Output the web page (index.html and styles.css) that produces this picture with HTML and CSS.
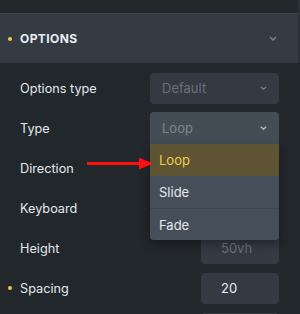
FILE: index.html
```html
<!DOCTYPE html>
<html lang="en">
<head>
    <meta charset="UTF-8">
    <meta name="viewport" content="width=device-width, initial-scale=1.0">
    <title>Options</title>
    <link rel="stylesheet" href="styles.css">
</head>
<body>
    <div class="topbar"></div>
    <div class="panel-head">
        <span class="dot"></span>
        <span class="title">OPTIONS</span>
        <svg class="chev head-chev" width="8" height="5" viewBox="0 0 8 5"><path d="M1 1l3 3 3-3" fill="none" stroke="currentColor" stroke-width="1.3"/></svg>
    </div>
    <div class="rows">
        <div class="row">
            <span class="label">Options type</span>
            <div class="box wide muted">Default
                <svg class="chev" width="7" height="4" viewBox="0 0 7 4"><path d="M.8.8l2.7 2.4L6.2.8" fill="none" stroke="currentColor" stroke-width="1.1"/></svg>
            </div>
        </div>
        <div class="row">
            <span class="label">Type</span>
            <div class="select-wrap">
                <div class="box wide open">Loop
                    <svg class="chev light" width="7" height="4" viewBox="0 0 7 4"><path d="M.8.8l2.7 2.4L6.2.8" fill="none" stroke="currentColor" stroke-width="1.3"/></svg>
                </div>
                <ul class="menu">
                    <li class="active">Loop</li>
                    <li>Slide</li>
                    <li class="split">Fade</li>
                </ul>
            </div>
        </div>
        <div class="row">
            <span class="label">Direction</span>
        </div>
        <div class="row">
            <span class="label">Keyboard</span>
        </div>
        <div class="row">
            <span class="label">Height</span>
            <div class="box narrow muted">50vh</div>
        </div>
        <div class="row">
            <span class="dot"></span>
            <span class="label">Spacing</span>
            <div class="box narrow">20</div>
        </div>
        <div class="row">
            <span class="label"></span>
            <div class="box narrow"></div>
        </div>
    </div>
    <svg class="pointer" width="300" height="314" viewBox="0 0 300 314">
        <line x1="87" y1="163.5" x2="142" y2="163.5" stroke="#ff0f0f" stroke-width="3"/>
        <polygon points="139,157.5 153,163.5 139,169.5" fill="#ff0f0f"/>
    </svg>
</body>
</html>
```

FILE: styles.css
```css
body {
    font-family: Inter, "Noto Sans", sans-serif;
    margin: 0;
    padding: 0;
    width: 300px;
    height: 314px;
    overflow: hidden;
    background-color: #22272c;
    color: #e3e9f0;
    position: relative;
}
.topbar {
    height: 13px;
    background-color: #22272b;
    border-right: 2px solid #2c3238;
}
.panel-head {
    height: 49px;
    display: flex;
    align-items: center;
    padding-left: 8px;
    padding-right: 21px;
    background-color: #343b43;
    border-top: 1px solid #3c444d;
    border-right: 2px solid #2a3036;
}
.title {
    font-size: 12px;
    font-weight: 700;
    letter-spacing: 0.4px;
    color: #e8eef5;
    margin-left: 8px;
    flex: 1;
}
.dot {
    width: 4px;
    height: 4px;
    border-radius: 50%;
    background-color: #f4c94a;
}
.head-chev {
    color: #a9b1ba;
}
.rows {
    padding: 5px 21px 0 0;
}
.row {
    height: 40px;
    display: flex;
    align-items: center;
    padding-left: 20px;
    position: relative;
}
.row .dot {
    position: absolute;
    left: 8px;
}
.label {
    font-size: 12.7px;
    color: #e1e7ee;
    flex: 1;
}
.box {
    height: 31px;
    box-sizing: border-box;
    border-radius: 4px;
    background-color: #333a42;
    display: flex;
    align-items: center;
    padding: 0 12px 0 20px;
    font-size: 13px;
    color: #e8eef4;
}
.box.wide {
    width: 129px;
    padding-left: 12px;
    justify-content: space-between;
}
.box.narrow {
    width: 78px;
}
.box.muted {
    color: #69727d;
}
.chev {
    color: #7d8691;
}
.chev.light {
    color: #b7bfc8;
}
.select-wrap {
    position: relative;
}
.box.open {
    height: 32px;
    background-color: #444c56;
    color: #7b8590;
    border-radius: 4px 4px 0 0;
    padding-left: 12px;
}
.menu {
    position: absolute;
    top: 32px;
    left: 0;
    width: 129px;
    margin: 0;
    padding: 0;
    list-style: none;
    background-color: #464f59;
    border-radius: 0 0 4px 4px;
    box-shadow: 0 4px 10px rgba(0, 0, 0, 0.35);
    z-index: 2;
    overflow: hidden;
}
.menu li {
    height: 32px;
    display: flex;
    align-items: center;
    padding-left: 9px;
    font-size: 13px;
    color: #e3e8ee;
    box-sizing: border-box;
}
.menu li.split {
    border-top: 1px solid #3e464f;
}
.menu li.active {
    background-color: #5e5434;
    color: #f2cb4e;
}
.pointer {
    position: absolute;
    left: 0;
    top: 0;
    z-index: 3;
    pointer-events: none;
}
```
